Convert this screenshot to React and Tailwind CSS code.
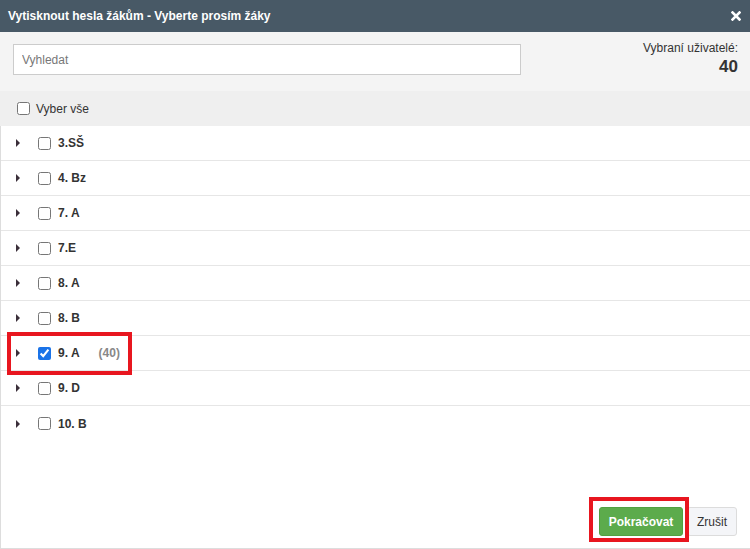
import React from 'react'

const groups = [
  { name: '3.SŠ' },
  { name: '4. Bz' },
  { name: '7. A' },
  { name: '7.E' },
  { name: '8. A' },
  { name: '8. B' },
  { name: '9. A', checked: true, count: 40 },
  { name: '9. D' },
  { name: '10. B' },
]

const Caret = () => (
  <span className="block w-0 h-0 border-y-[4px] border-y-transparent border-l-[4px] border-l-[#3b2f3a]" />
)

const GroupRow = ({ group }) => (
  <div className="h-[35px] flex items-center border-b border-[#e6e6e6] last:border-b-0">
    <div className="w-[37px] pl-[15px] flex items-center">
      <Caret />
    </div>
    <input
      type="checkbox"
      defaultChecked={group.checked}
      className="m-0 w-[13px] h-[13px] accent-[#1a73e8]"
    />
    <span className="ml-[7px] text-[12px] font-bold text-[#333]">{group.name}</span>
    {group.count && (
      <span className="ml-[19px] text-[12px] font-bold text-[#888]">({group.count})</span>
    )}
  </div>
)

export default function App() {
  return (
    <div className="relative w-[750px] h-[549px] bg-white flex flex-col font-['Liberation_Sans',Arial,sans-serif] text-[#333]">
      {/* header */}
      <div className="h-[32px] shrink-0 bg-[#485966] flex items-center justify-between pl-[8px] pr-[8px]">
        <span className="text-[12px] font-bold text-white">Vytisknout hesla žákům - Vyberte prosím žáky</span>
        <svg width="10" height="10" viewBox="0 0 10 10" className="mr-[1px]">
          <path d="M1.5 1.5 L8.5 8.5 M8.5 1.5 L1.5 8.5" stroke="white" strokeWidth="2.6" strokeLinecap="square" />
        </svg>
      </div>

      {/* search */}
      <div className="h-[59px] shrink-0 bg-[#f4f4f4] flex justify-between">
        <div className="pl-[13px] pt-[12px]">
          <input
            placeholder="Vyhledat"
            className="w-[508px] h-[31px] bg-white border border-[#cccccc] px-[8px] text-[12px] outline-none placeholder:text-[#777]"
          />
        </div>
        <div className="pr-[12px] pt-[10px] text-right leading-none">
          <div className="text-[12px] text-[#333]">Vybraní uživatelé:</div>
          <div className="mt-[4px] text-[17px] font-bold text-[#333]">40</div>
        </div>
      </div>

      {/* select all */}
      <div className="h-[35px] shrink-0 bg-[#efefef] flex items-center pl-[17px]">
        <input type="checkbox" className="m-0 w-[13px] h-[13px]" />
        <span className="ml-[6px] text-[12px] text-[#333]">Vyber vše</span>
      </div>

      {/* list */}
      <div className="flex-1 flex flex-col border-l border-b border-[#dddddd]">
        <div className="flex flex-col">
          {groups.map(g => (
            <GroupRow key={g.name} group={g} />
          ))}
        </div>
        <div className="flex-1" />
        <div className="flex justify-end gap-[4px] pr-[13px] pb-[12px]">
          <button className="h-[29px] w-[84px] rounded-[3px] bg-[#5cab4c] border border-[#51a041] text-white text-[12px] font-bold">
            Pokračovat
          </button>
          <button className="h-[29px] w-[50px] rounded-[3px] bg-[#f4f5f8] border border-[#dcdcdc] text-[#333] text-[12px]">
            Zrušit
          </button>
        </div>
      </div>

      {/* annotation boxes */}
      <div className="absolute left-[7px] top-[332px] w-[125px] h-[43px] border-[4px] border-[#e8161f]" />
      <div className="absolute left-[589px] top-[497px] w-[100px] h-[45px] border-[4px] border-[#e8161f]" />
    </div>
  )
}
